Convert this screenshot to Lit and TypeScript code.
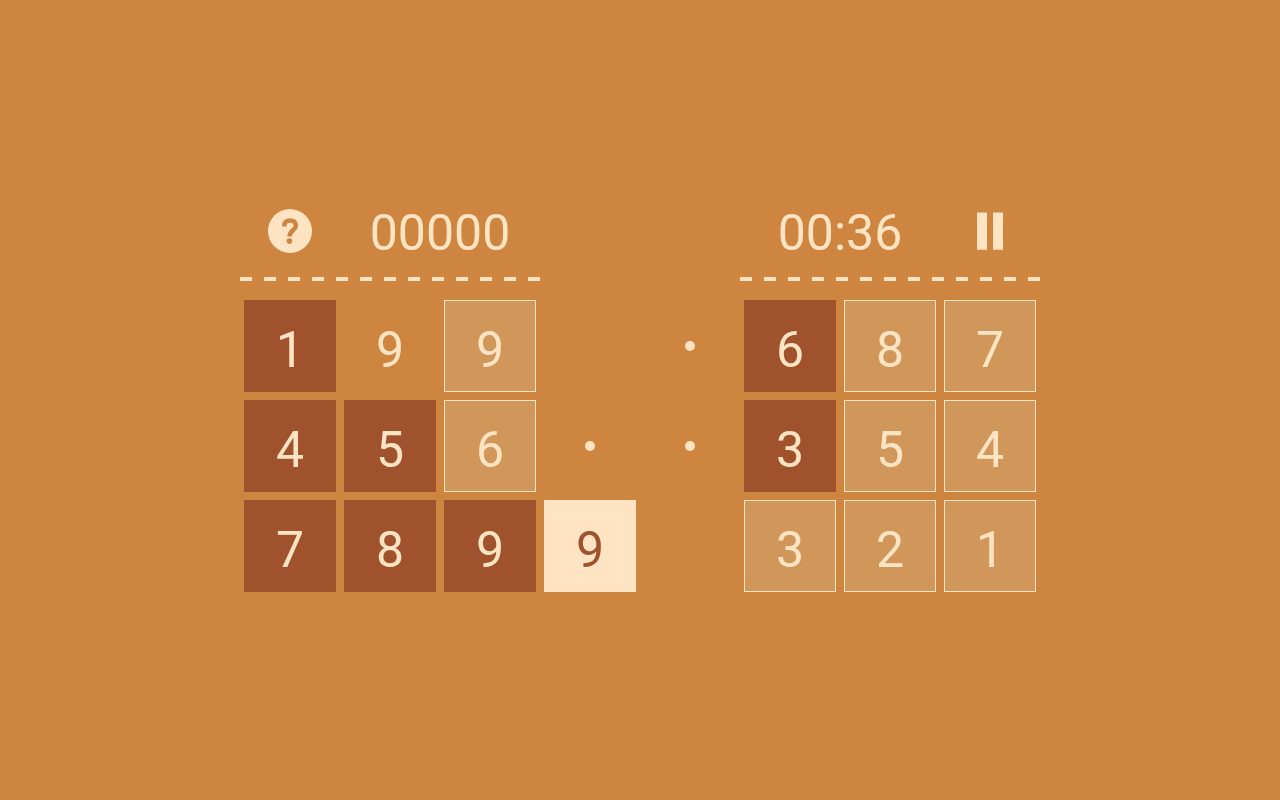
import { LitElement, html, css } from "lit";
import { customElement } from "lit/decorators.js";
import { classMap } from "lit/directives/class-map.js";

type Kind = "solid" | "ghost" | "plain" | "active" | "dot" | "empty";
interface Cell {
  kind: Kind;
  value?: number;
}

const s = (value: number): Cell => ({ kind: "solid", value });
const g = (value: number): Cell => ({ kind: "ghost", value });
const dot: Cell = { kind: "dot" };
const empty: Cell = { kind: "empty" };

const BOARD: Cell[] = [
  s(1), { kind: "plain", value: 9 }, g(9), empty, dot, s(6), g(8), g(7),
  s(4), s(5), g(6), dot, dot, s(3), g(5), g(4),
  s(7), s(8), s(9), { kind: "active", value: 9 }, empty, g(3), g(2), g(1),
];

@customElement("app-root")
export class AppRoot extends LitElement {
  static styles = css`
    :host {
      display: flex;
      align-items: center;
      justify-content: center;
      min-height: 100vh;
      background: #cd853f;
      color: #ffe4c4;
      font-family: Roboto, sans-serif;
      font-size: 50px;
    }
    .game {
      width: 100%;
      max-width: 800px;
    }
    .head,
    .board {
      display: grid;
      grid-template-columns: repeat(8, 1fr);
    }
    .head {
      padding-bottom: 19px;
    }
    .panel {
      display: grid;
      grid-template-columns: repeat(3, 1fr);
      grid-column: span 3;
      row-gap: 11px;
    }
    .right {
      grid-column: 6 / span 3;
    }
    .readout {
      grid-column: span 2;
      line-height: 66px;
      text-align: center;
    }
    .dashes {
      grid-column: 1 / -1;
      height: 4px;
      background: repeating-linear-gradient(90deg, #ffe4c4 0 12px, transparent 12px 24px);
    }
    button {
      padding: 0;
      border: 0;
      background: none;
      color: inherit;
      font: inherit;
      cursor: pointer;
    }
    .icon {
      display: flex;
      align-items: center;
      justify-content: center;
      height: 62px;
    }
    .tile {
      box-sizing: border-box;
      height: 92px;
      margin: 0 4px 8px;
      line-height: 100px;
      text-align: center;
    }
    .solid {
      background: #a0522d;
    }
    .ghost {
      border: 1px solid #ffe4c4;
      background: #d1975a;
      line-height: 98px;
    }
    .active {
      background: #ffe4c4;
      color: #a0522d;
    }
    .dot {
      display: flex;
      align-items: center;
      justify-content: center;
    }
    .dot::before {
      content: "";
      width: 10px;
      height: 10px;
      border-radius: 50%;
      background: #ffe4c4;
    }
  `;

  private renderCell({ kind, value }: Cell) {
    const classes = classMap({ tile: true, [kind]: true });
    return value === undefined
      ? html`<div class=${classes}></div>`
      : html`<button class=${classes} type="button">${value}</button>`;
  }

  render() {
    return html`
      <main class="game">
        <header class="head">
          <div class="panel">
            <button class="icon" type="button" aria-label="Help">
              <svg width="44" height="44" viewBox="0 0 44 44" aria-hidden="true">
                <circle cx="22" cy="22" r="22" fill="currentColor" />
                <path
                  d="M16.2 17.4C16.2 13.3 18.4 11.4 22 11.4S28 13.3 28 16.6C28 21 21.5 21.4 21.5 27.6"
                  fill="none"
                  stroke="#cd853f"
                  stroke-width="4.5"
                />
                <circle cx="21.4" cy="32.1" r="2.8" fill="#cd853f" />
              </svg>
            </button>
            <div class="readout">00000</div>
            <div class="dashes"></div>
          </div>
          <div class="panel right">
            <div class="readout">00:36</div>
            <button class="icon" type="button" aria-label="Pause">
              <svg width="26" height="38" viewBox="0 0 26 38" aria-hidden="true">
                <path d="M0 0.4h10v37.4H0zM16 0.4h10v37.4H16z" fill="currentColor" />
              </svg>
            </button>
            <div class="dashes"></div>
          </div>
        </header>
        <section class="board">${BOARD.map((cell) => this.renderCell(cell))}</section>
      </main>
    `;
  }
}
